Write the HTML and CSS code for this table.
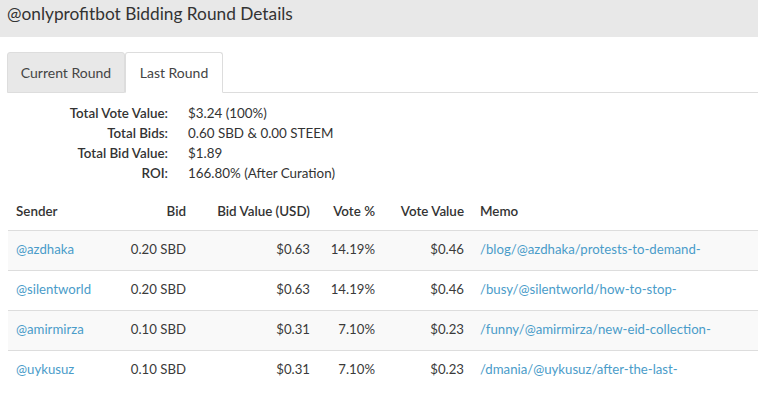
FILE: index.html
```html
<!DOCTYPE html>
<html>
<head>
<meta charset="utf-8">
<link rel="stylesheet" href="styles.css">
</head>
<body>
<div class="header">@onlyprofitbot Bidding Round Details</div>
<div class="content">
  <div class="tabs">
    <div class="tab">Current Round</div>
    <div class="tab active">Last Round</div>
    <div class="tab-rest"></div>
  </div>
  <div class="summary">
    <div class="label">Total Vote Value:</div><div class="value">$3.24 (100%)</div>
    <div class="label">Total Bids:</div><div class="value">0.60 SBD &amp; 0.00 STEEM</div>
    <div class="label">Total Bid Value:</div><div class="value">$1.89</div>
    <div class="label">ROI:</div><div class="value">166.80% (After Curation)</div>
  </div>
  <table class="bids">
    <thead>
      <tr>
        <th class="c-sender">Sender</th>
        <th class="c-bid num">Bid</th>
        <th class="c-bv num">Bid Value (USD)</th>
        <th class="c-vp num">Vote %</th>
        <th class="c-vv num">Vote Value</th>
        <th class="c-memo">Memo</th>
      </tr>
    </thead>
    <tbody>
      <tr class="odd">
        <td><a>@azdhaka</a></td><td class="num">0.20 SBD</td><td class="num">$0.63</td><td class="num">14.19%</td><td class="num">$0.46</td><td><a>/blog/@azdhaka/protests-to-demand-</a></td>
      </tr>
      <tr>
        <td><a>@silentworld</a></td><td class="num">0.20 SBD</td><td class="num">$0.63</td><td class="num">14.19%</td><td class="num">$0.46</td><td><a>/busy/@silentworld/how-to-stop-</a></td>
      </tr>
      <tr class="odd">
        <td><a>@amirmirza</a></td><td class="num">0.10 SBD</td><td class="num">$0.31</td><td class="num">7.10%</td><td class="num">$0.23</td><td><a>/funny/@amirmirza/new-eid-collection-</a></td>
      </tr>
      <tr>
        <td><a>@uykusuz</a></td><td class="num">0.10 SBD</td><td class="num">$0.31</td><td class="num">7.10%</td><td class="num">$0.23</td><td><a>/dmania/@uykusuz/after-the-last-</a></td>
      </tr>
    </tbody>
  </table>
</div>
</body>
</html>
```
FILE: styles.css
```css
html, body {
  margin: 0;
  padding: 0;
  background: #fff;
  font-family: "Lato", "Open Sans", sans-serif;
  font-size: 13.4px;
  color: #333;
  overflow: hidden;
}
.header {
  background: #e8e8e8;
  height: 37px;
  box-sizing: border-box;
  padding: 0 7px;
  font-size: 17.3px;
  line-height: 28px;
  color: #333;
}
.content {
  padding: 15px 0 0 7px;
}
.tabs {
  display: flex;
  height: 41px;
}
.tab {
  box-sizing: border-box;
  line-height: 40px;
  border: 1px solid #ddd;
  border-radius: 3px 3px 0 0;
  background: #e8e8e8;
  color: #444;
  font-size: 14px;
  text-align: center;
}
.tab:first-child {
  width: 118px;
}
.tab.active {
  background: #fff;
  border-bottom-color: #fff;
  width: 98px;
}
.tab-rest {
  flex: 1;
  border-bottom: 1px solid #ddd;
}
.summary {
  display: grid;
  grid-template-columns: 161px auto;
  column-gap: 20px;
  padding-top: 10px;
  line-height: 20px;
}
.summary .label {
  text-align: right;
  font-weight: 600;
  color: #333;
}
.bids {
  border-collapse: collapse;
  margin-top: 10px;
  margin-left: 1px;
  width: 760px;
  font-size: 13.2px;
  color: #3a3a3a;
}
.bids th {
  text-align: left;
  font-weight: 600;
  height: 35px;
  padding: 0 8px 2px;
  color: #333;
  border-bottom: 1px solid #ddd;
  font-size: 13.4px;
}
.bids td {
  height: 35px;
  padding: 0 8px 4px;
  border-top: 1px solid #ddd;
}
.bids .num {
  text-align: right;
}
.bids tr.odd td {
  background: #f9f9f9;
}
.bids a {
  color: #4a9cc9;
}
.c-sender { width: 92px; }
.c-bid { width: 62px; }
.c-bv { width: 108px; }
.c-vp { width: 49px; }
.c-vv { width: 73px; }
```
